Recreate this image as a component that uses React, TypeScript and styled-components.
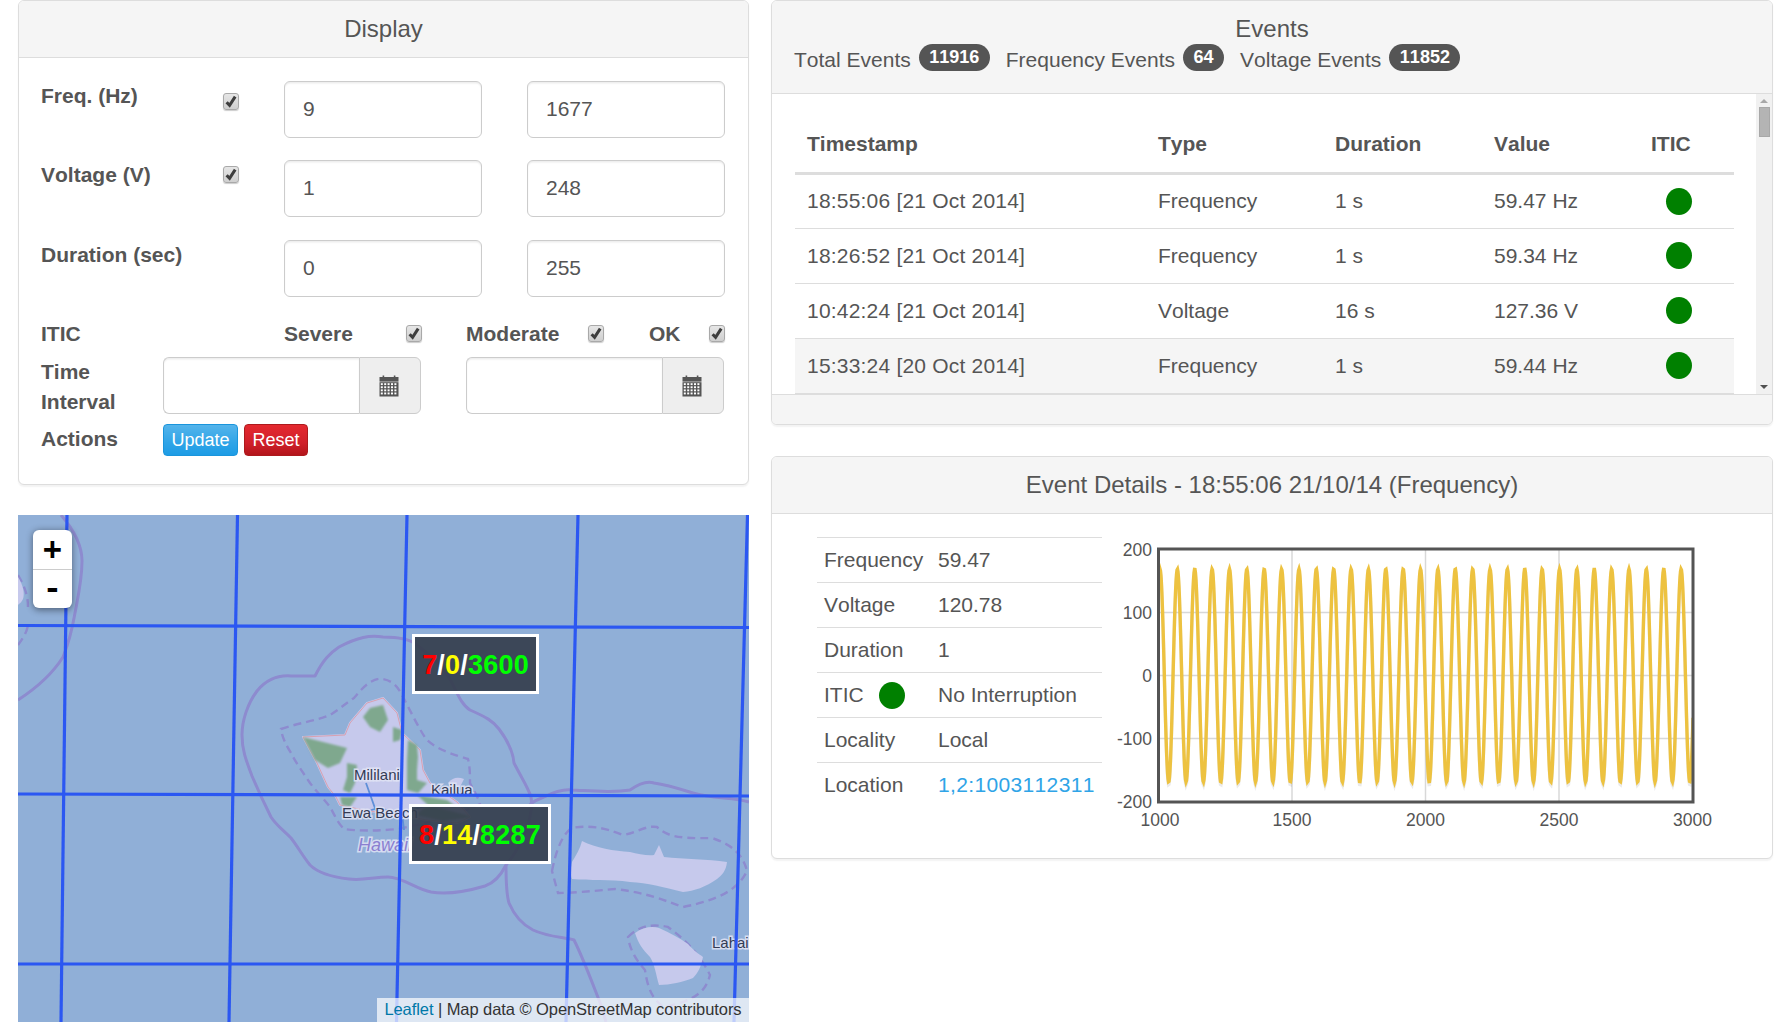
import React from "react";
import styled, { createGlobalStyle } from "styled-components";

const GlobalStyle = createGlobalStyle`
  html, body {
    margin: 0;
    padding: 0;
    background: #fff;
    overflow: hidden;
  }
  body {
    font-family: "Liberation Sans", Arial, sans-serif;
    font-size: 21px;
    line-height: 30px;
    color: #555;
    font-kerning: none;
  }
  * {
    box-sizing: border-box;
  }
`;

const Page = styled.div`
  display: flex;
  gap: 22px;
  width: 1790px;
  padding: 0 17px 0 18px;
  align-items: flex-start;
`;

const LeftColumn = styled.div`
  width: 731px;
  display: flex;
  flex-direction: column;
  gap: 30px;
`;

const RightColumn = styled.div`
  width: 1002px;
  display: flex;
  flex-direction: column;
  gap: 31px;
`;

const Panel = styled.section`
  border: 1px solid #ddd;
  border-radius: 6px;
  background: #fff;
  box-shadow: 0 1.5px 1.5px rgba(0, 0, 0, 0.05);
  overflow: hidden;
`;

const PanelHeader = styled.header`
  background: #f5f5f5;
  border-bottom: 1px solid #ddd;
  padding: 11px 22px;
  height: 57px;
`;

const EventsHeader = styled(PanelHeader)`
  height: 93px;
`;

const PanelTitle = styled.h3`
  margin: 0;
  font-size: 24px;
  font-weight: 400;
  line-height: 33px;
  text-align: center;
  color: #555;
`;

const DisplayBody = styled.div`
  padding: 23px 23px 28px 22px;
`;

const RangeGrid = styled.div`
  display: grid;
  grid-template-columns: 198px 198px 198px;
  grid-template-rows: 57px 58px 57px;
  column-gap: 45px;
  row-gap: 22px;
`;

const RangeLabel = styled.div`
  display: flex;
  justify-content: space-between;
  align-items: flex-start;
`;

const FieldLabel = styled.label<{ $width?: number }>`
  display: block;
  font-weight: 700;
  color: #555;
  flex: none;
  width: ${(p) => (p.$width ? `${p.$width}px` : "auto")};
`;

const TextInput = styled.input`
  display: block;
  width: 100%;
  height: 57px;
  padding: 0 18px 2px;
  border: 1px solid #ccc;
  border-radius: 6px;
  background: #fff;
  box-shadow: inset 0 1.5px 1.5px rgba(0, 0, 0, 0.075);
  font: inherit;
  color: #555;
`;

const CheckBox = styled.span<{ $top?: number }>`
  display: flex;
  align-items: center;
  justify-content: center;
  flex: none;
  width: 16px;
  height: 17px;
  margin-top: ${(p) => p.$top ?? 0}px;
  border: 1px solid #a9a9a9;
  border-radius: 3px;
  background: linear-gradient(#e6e6e6, #cfcfcf);
  box-shadow: 0 1px 1px rgba(0, 0, 0, 0.2);
`;

const FilterRow = styled.div`
  display: flex;
  margin-top: 22px;
  height: 30px;
`;

const FilterOption = styled.div<{ $gap?: number }>`
  display: flex;
  align-items: flex-start;
  margin-right: ${(p) => p.$gap ?? 0}px;
`;

const TimeRow = styled.div`
  display: flex;
  margin-top: 8px;
  gap: 45px;
`;

const TimeLabel = styled(FieldLabel)`
  width: 122px;
  margin-right: -45px;
`;

const InputGroup = styled.div`
  display: flex;
  width: 258px;
  height: 57px;
`;

const GroupInput = styled(TextInput)`
  flex: 1;
  min-width: 0;
  border-right: 0;
  border-radius: 6px 0 0 6px;
`;

const GroupAddon = styled.span`
  display: flex;
  align-items: center;
  justify-content: center;
  width: 62px;
  padding-right: 3px;
  border: 1px solid #ccc;
  border-radius: 0 6px 6px 0;
  background: #eee;
`;

const ActionsRow = styled.div`
  display: flex;
  margin-top: 7px;
`;

const ButtonRow = styled.div`
  display: flex;
  gap: 6px;
`;

const Button = styled.button<{ $variant: "primary" | "danger" }>`
  height: 32px;
  padding: 0 7.5px;
  border: 1px solid ${(p) => (p.$variant === "primary" ? "#1a95dc" : "#ad1a1d")};
  border-radius: 4px;
  color: #fff;
  font: 18px "Liberation Sans", Arial, sans-serif;
  font-kerning: none;
  background: ${(p) =>
    p.$variant === "primary"
      ? "linear-gradient(#54b4eb, #2fa4e7 60%, #1d9ce5)"
      : "linear-gradient(#e4292f, #d0202a 60%, #b3151b)"};
`;

const MapBox = styled.div`
  position: relative;
  width: 731px;
  height: 507px;
  overflow: hidden;
  background: #90afd7;
`;

const MapDrawing = styled.svg`
  display: block;
`;

const ZoomControl = styled.div`
  position: absolute;
  left: 15px;
  top: 15px;
  width: 39px;
  border-radius: 6px;
  background: #fff;
  box-shadow: 0 1.5px 7px rgba(0, 0, 0, 0.45);
`;

const ZoomButton = styled.a<{ $nudge?: number }>`
  display: flex;
  align-items: center;
  justify-content: center;
  height: 39px;
  padding-top: ${(p) => p.$nudge ?? 0}px;
  color: #000;
  font: 700 33px "Liberation Mono", monospace;
  & + & {
    border-top: 1px solid #ccc;
  }
`;

const Marker = styled.div<{ $left: number; $top: number; $width: number }>`
  position: absolute;
  left: ${(p) => p.$left}px;
  top: ${(p) => p.$top}px;
  width: ${(p) => p.$width}px;
  height: 60px;
  border: 3px solid #fff;
  background: rgba(51, 60, 74, 0.9);
  color: #fff;
  font-size: 27px;
  font-weight: 700;
  letter-spacing: 0.2px;
  line-height: 56px;
  text-align: center;
  white-space: nowrap;
`;

const Count = styled.span<{ $color: string }>`
  color: ${(p) => p.$color};
`;

const Attribution = styled.div`
  position: absolute;
  right: 0;
  bottom: 0;
  height: 24px;
  padding: 0 7.5px;
  background: rgba(255, 255, 255, 0.7);
  color: #333;
  font-size: 16.5px;
  letter-spacing: -0.07px;
  line-height: 23px;
  white-space: nowrap;
`;

const AttributionLink = styled.a`
  color: #0078a8;
`;

const Totals = styled.div`
  display: flex;
  align-items: flex-start;
  line-height: 30px;
  height: 30px;
`;

const TotalItem = styled.span`
  display: flex;
  align-items: flex-start;
  margin-right: 16px;
  color: #555;
`;

const Badge = styled.span`
  display: inline-block;
  height: 27px;
  margin: -1px 0 0 8px;
  padding: 0 10.5px;
  border-radius: 15px;
  background: #555;
  color: #fff;
  font-size: 18px;
  font-weight: 700;
  line-height: 26px;
`;

const EventsViewport = styled.div`
  display: flex;
  height: 300px;
  overflow: hidden;
`;

const TableWrap = styled.div`
  flex: 1;
  padding: 23px 22px 0 23px;
  overflow: hidden;
`;

const EventsTable = styled.table`
  width: 939px;
  table-layout: fixed;
  border-collapse: collapse;
`;

const HeadCell = styled.th`
  height: 56px;
  padding: 0 12px;
  border-bottom: 3px solid #ddd;
  font-weight: 700;
  text-align: left;
  color: #555;
`;

const EventRow = styled.tr<{ $active?: boolean }>`
  background: ${(p) => (p.$active ? "#f5f5f5" : "transparent")};
`;

const EventCell = styled.td`
  height: 55px;
  padding: 0 12px;
  border-bottom: 1px solid #ddd;
`;

const TimeCell = styled(EventCell)`
  letter-spacing: 0.2px;
`;

const StatusDot = styled.span<{ $indent?: number }>`
  display: block;
  width: 26px;
  height: 27px;
  margin-left: ${(p) => p.$indent ?? 0}px;
  border-radius: 50%;
  background: #008000;
`;

const ScrollTrack = styled.div`
  display: flex;
  flex-direction: column;
  align-items: center;
  flex: none;
  width: 16px;
  background: #f1f1f1;
`;

const ScrollThumb = styled.div`
  width: 11px;
  height: 30px;
  margin-top: 4px;
  border: 1px solid #a8a8a8;
  background: #b4b4b4;
`;

const ScrollArrow = styled.div<{ $up?: boolean }>`
  width: 0;
  height: 0;
  border-left: 4px solid transparent;
  border-right: 4px solid transparent;
  margin-top: ${(p) => (p.$up ? "5px" : "auto")};
  margin-bottom: ${(p) => (p.$up ? "0" : "5px")};
  border-bottom: ${(p) => (p.$up ? "4px solid #a8a8a8" : "0")};
  border-top: ${(p) => (p.$up ? "0" : "4px solid #505050")};
`;

const PanelFooter = styled.footer`
  height: 30px;
  background: #f5f5f5;
  border-top: 1px solid #ddd;
`;

const DetailsBody = styled.div`
  display: flex;
  align-items: flex-start;
  gap: 8px;
  padding: 23px 0 21px 45px;
`;

const DetailsTable = styled.table`
  width: 285px;
  flex: none;
  table-layout: fixed;
  border-collapse: collapse;
`;

const DetailCell = styled.td<{ $width?: number }>`
  height: 45px;
  padding: 0 7px;
  border-top: 1px solid #ddd;
  white-space: nowrap;
  width: ${(p) => (p.$width ? `${p.$width}px` : "auto")};
`;

const DetailLabel = styled.div`
  display: flex;
  align-items: center;
  gap: 15px;
`;

const DetailLink = styled.a`
  color: #2fa4e7;
  letter-spacing: 0.35px;
`;

const CheckMark = () => (
  <svg width="14" height="15" viewBox="0 0 14 15">
    <path d="M2.6 8.2 L5.6 11.4 L11.2 2.6" fill="none" stroke="#3e3e3e" strokeWidth="3" />
  </svg>
);

const CalendarIcon = () => {
  const dots = [];
  for (let row = 0; row < 4; row++) {
    for (let col = 0; col < 5; col++) {
      dots.push(<rect key={`${row}-${col}`} x={1.8 + col * 3.4} y={8.2 + row * 3.1} width="2" height="1.9" fill="#fff" />);
    }
  }
  return (
    <svg width="20" height="22" viewBox="0 0 20 22">
      <rect x="0.5" y="2" width="19" height="4.6" fill="#555" />
      <rect x="3.6" y="0.5" width="1.6" height="3" fill="#555" />
      <rect x="14.8" y="0.5" width="1.6" height="3" fill="#555" />
      <rect x="0.5" y="7.2" width="19" height="14.3" fill="#555" />
      {dots}
    </svg>
  );
};

const WATER_LINE = "#8d8bcf";
const GRATICULE = "#2b57f2";
const LAND = "#c6c9ec";
const FOREST = "#7fa88e";

const OAHU =
  "M285 222 L327 220 L332 208 L349 188 L365 183 L379 198 L384 218 L402 235 L405 255 L412 268 L439 287 L452 302 L439 308 L409 305 L392 302 L345 295 L322 290 L318 282 L310 272 L299 248 Z";

const LandLabel = styled.text`
  font-family: "Liberation Sans", Arial, sans-serif;
  font-size: 15px;
  fill: #333b55;
  paint-order: stroke;
  stroke: rgba(225, 228, 245, 0.85);
  stroke-width: 3px;
`;

const SeaLabel = styled(LandLabel)`
  font-size: 18px;
  font-style: italic;
  fill: #8b7fd0;
`;

const MapSketch = () => (
  <MapDrawing width="731" height="507" viewBox="0 0 731 507">
    <defs>
      <filter id="soft">
        <feGaussianBlur stdDeviation="0.7" />
      </filter>
      <filter id="softer">
        <feGaussianBlur stdDeviation="1.3" />
      </filter>
    </defs>
    <g filter="url(#soft)">
      {/* maritime boundaries */}
      <g fill="none" stroke={WATER_LINE} strokeWidth="3" strokeLinejoin="round">
        <path d="M297 161 C305 145 312 138 321 132 C340 122 352 120 365 122 C382 122 392 124 399 130 C415 142 425 152 433 166 C440 180 444 190 452 195 C468 202 475 206 481 214 C490 226 495 236 496 248 C503 262 510 272 513 282 C516 300 505 330 488 350 C482 362 476 368 467 371 C450 376 430 380 413 377 C398 374 384 362 370 362 C356 362 344 366 331 364 C314 362 300 358 292 350 C284 340 280 332 273 323 C265 315 258 310 253 302 C246 288 240 275 234 261 C228 245 224 235 224 220 C224 205 230 188 239 176 C248 165 260 160 273 161 Z" />
        <path d="M488 350 C488 365 488 378 491 388 C497 402 505 410 515 415 C530 422 545 422 556 425 C566 445 575 470 583 490 L588 507" />
        <path d="M510 292 C515 285 520 285 526 282 C538 276 546 274 554 275 C575 276 595 278 612 275 C622 268 630 266 636 268 C650 270 662 274 675 278 C695 284 715 282 731 287" />
        <path d="M43 0 C56 15 64 30 64 46 C64 65 60 82 57 98 C54 115 50 130 45 142 C35 158 20 172 0 185" />
      </g>
      <g fill="none" stroke={WATER_LINE} strokeWidth="2.4" strokeDasharray="8 5">
        <path d="M263 214 C280 208 298 206 312 200 C322 194 328 188 336 183 C345 172 355 162 365 164 C375 166 380 172 384 180 C392 195 400 212 408 224 C420 236 438 240 450 244 C452 252 452 260 452 268 C456 276 460 282 462 289 C440 300 410 308 380 314 C360 316 340 316 326 314 C318 306 316 298 312 292 C306 284 298 276 292 268 C284 256 278 248 273 238 C268 230 264 222 263 214 Z" />
        <path d="M534 356 C538 335 545 318 554 313 C570 310 585 312 605 320 C618 318 628 310 639 312 C648 320 656 324 694 323 C715 330 725 340 729 356 C720 375 700 385 665 392 C645 385 630 378 597 374 C575 376 555 378 540 378 Z" />
        <path d="M610 422 C620 412 632 408 650 412 C668 425 682 440 692 460 C688 475 680 485 646 492 C635 485 630 475 627 455 C618 445 612 435 610 422 Z" />
        <path d="M0 60 C6 70 10 80 10 92 M0 130 C6 122 10 115 10 108" />
      </g>
      {/* land */}
      <path fill={LAND} stroke={LAND} strokeWidth="2" strokeLinejoin="round" d={OAHU} />
      <path fill="none" stroke="#d9a0b0" strokeWidth="1" d={OAHU} />
      <path fill={LAND} d="M430 268 C435 262 440 262 446 264 L442 272 L434 274 Z" />
      <path fill={LAND} d="M564 326 C578 333 596 336 612 337 C620 339 630 341 636 340 L641 330 L646 342 C665 344 690 344 709 347 C708 356 704 360 699 364 C688 372 676 376 665 377 C645 372 630 368 612 367 C592 364 572 366 554 364 C552 358 553 352 554 347 C558 340 562 334 564 326 Z" />
      <path fill={LAND} d="M617 418 C625 412 634 411 641 413 C652 418 662 423 670 429 C676 436 681 439 685 442 C683 452 680 458 675 463 C665 467 652 470 641 470 C638 460 637 450 632 442 C625 435 620 428 617 418 Z" />
      <path fill={LAND} d="M0 62 C5 70 7 78 5 84 C3 88 2 88 0 90 Z" />
      <g fill="none" stroke="#5f8fd8" strokeWidth="1.8">
        <path d="M338 302 C350 296 358 292 365 294 C372 296 376 298 384 298 C392 296 398 292 410 291 L425 290" />
        <path d="M348 268 L358 296 M384 298 L386 315" />
      </g>
    </g>
    <g fill={FOREST} filter="url(#softer)">
      <path d="M285 222 L329 233 L322 248 L310 253 L297 245 Z" />
      <path d="M352 193 L365 190 L370 205 L362 217 L352 212 L345 202 Z" />
      <path d="M390 225 L399 230 L400 242 L399 255 L399 265 L409 268 L400 278 L389 275 L389 262 L389 245 Z" />
      <path d="M375 212 L384 215 L382 225 L375 227 Z" />
      <path d="M329 248 L339 250 L337 268 L332 278 L325 275 L329 262 Z" />
      <path d="M322 282 L339 282 L332 292 L324 290 Z" />
      <path d="M399 280 L429 285 L439 292 L412 292 Z" />
      <path d="M410 290 L455 302 L425 306 L398 300 Z" />
    </g>
    <LandLabel x="336" y="265">Mililani</LandLabel>
    <LandLabel x="413" y="280">Kailua</LandLabel>
    <LandLabel x="324" y="303">Ewa Beach</LandLabel>
    <SeaLabel x="340" y="336">Hawaii</SeaLabel>
    <LandLabel x="694" y="433">Lahai</LandLabel>
    {/* graticule */}
    <g stroke={GRATICULE} strokeWidth="3.2" fill="none">
      <path d="M0 110.5 L731 112.5" />
      <path d="M0 279 L731 281" />
      <path d="M0 449 L731 449" />
      <path d="M49 0 L43 507" />
      <path d="M219.5 0 L211 507" />
      <path d="M389 0 L378.5 507" />
      <path d="M560 0 L548 507" />
      <path d="M729.5 0 L716 507" />
    </g>
  </MapDrawing>
);

const CHART_X = 1110;
const CHART_Y = 537;
const plotLeft = 1158.5 - CHART_X;
const plotRight = 1693 - CHART_X;
const plotTop = 549 - CHART_Y;
const plotBottom = 802 - CHART_Y;
const zeroY = 675.5 - CHART_Y;

const wavePoints = () => {
  const points: string[] = [];
  for (let x = plotLeft; x <= plotRight; x += 0.5) {
    const value = 169 * Math.cos((2 * Math.PI * (x - (1160 - CHART_X))) / 17.37);
    points.push(`${x.toFixed(1)},${(zeroY - value * 0.63).toFixed(1)}`);
  }
  return points.join(" ");
};

const TickText = styled.text`
  font-family: "Liberation Sans", Arial, sans-serif;
  font-size: 17.5px;
  fill: #545454;
`;

const xTicks = [
  { label: "1000", x: 1160 },
  { label: "1500", x: 1292 },
  { label: "2000", x: 1425.5 },
  { label: "2500", x: 1559 },
  { label: "3000", x: 1692.5 },
];

const yTicks = [
  { label: "200", y: 550 },
  { label: "100", y: 612.5 },
  { label: "0", y: 675.5 },
  { label: "-100", y: 738.5 },
  { label: "-200", y: 801.5 },
];

const WaveChart = () => {
  const points = wavePoints();
  return (
    <svg width="620" height="300" viewBox="0 0 620 300">
      <defs>
        <clipPath id="plot">
          <rect x={plotLeft} y={plotTop} width={plotRight - plotLeft} height={plotBottom - plotTop} />
        </clipPath>
      </defs>
      <g stroke="#d8d8d8" strokeWidth="1.5">
        {[1292, 1425.5, 1559].map((x) => (
          <line key={x} x1={x - CHART_X} x2={x - CHART_X} y1={plotTop} y2={plotBottom} />
        ))}
        {[612.5, 675.5, 738.5].map((y) => (
          <line key={y} x1={plotLeft} x2={plotRight} y1={y - CHART_Y} y2={y - CHART_Y} />
        ))}
      </g>
      <g clipPath="url(#plot)" fill="none">
        <polyline points={points} stroke="rgba(0,0,0,0.08)" strokeWidth="3.4" transform="translate(0 3)" />
        <polyline points={points} stroke="#edc240" strokeWidth="3.4" />
      </g>
      <rect x={plotLeft} y={plotTop} width={plotRight - plotLeft} height={plotBottom - plotTop} fill="none" stroke="#545454" strokeWidth="3" />
      {yTicks.map((t) => (
        <TickText key={t.label} x={1152 - CHART_X} y={t.y - CHART_Y + 6} textAnchor="end">
          {t.label}
        </TickText>
      ))}
      {xTicks.map((t) => (
        <TickText key={t.label} x={t.x - CHART_X} y={826 - CHART_Y} textAnchor="middle">
          {t.label}
        </TickText>
      ))}
    </svg>
  );
};

const events = [
  { time: "18:55:06 [21 Oct 2014]", type: "Frequency", duration: "1 s", value: "59.47 Hz" },
  { time: "18:26:52 [21 Oct 2014]", type: "Frequency", duration: "1 s", value: "59.34 Hz" },
  { time: "10:42:24 [21 Oct 2014]", type: "Voltage", duration: "16 s", value: "127.36 V" },
  { time: "15:33:24 [20 Oct 2014]", type: "Frequency", duration: "1 s", value: "59.44 Hz" },
];

const ranges = [
  { label: "Freq. (Hz)", min: "9", max: "1677", check: 12 },
  { label: "Voltage (V)", min: "1", max: "248", check: 6 },
  { label: "Duration (sec)", min: "0", max: "255" },
];

const App: React.FC = () => {
  return (
    <>
      <GlobalStyle />
      <Page>
        <LeftColumn>
          <Panel>
            <PanelHeader>
              <PanelTitle>Display</PanelTitle>
            </PanelHeader>
            <DisplayBody>
              <RangeGrid>
                {ranges.map((r) => (
                  <React.Fragment key={r.label}>
                    <RangeLabel>
                      <FieldLabel>{r.label}</FieldLabel>
                      {r.check !== undefined && (
                        <CheckBox $top={r.check}>
                          <CheckMark />
                        </CheckBox>
                      )}
                    </RangeLabel>
                    <TextInput defaultValue={r.min} />
                    <TextInput defaultValue={r.max} />
                  </React.Fragment>
                ))}
              </RangeGrid>
              <FilterRow>
                <FieldLabel $width={243}>ITIC</FieldLabel>
                <FilterOption $gap={44}>
                  <FieldLabel $width={122}>Severe</FieldLabel>
                  <CheckBox $top={6}>
                    <CheckMark />
                  </CheckBox>
                </FilterOption>
                <FilterOption $gap={45}>
                  <FieldLabel $width={122}>Moderate</FieldLabel>
                  <CheckBox $top={6}>
                    <CheckMark />
                  </CheckBox>
                </FilterOption>
                <FilterOption>
                  <FieldLabel $width={60}>OK</FieldLabel>
                  <CheckBox $top={6}>
                    <CheckMark />
                  </CheckBox>
                </FilterOption>
              </FilterRow>
              <TimeRow>
                <TimeLabel>Time Interval</TimeLabel>
                <InputGroup>
                  <GroupInput />
                  <GroupAddon>
                    <CalendarIcon />
                  </GroupAddon>
                </InputGroup>
                <InputGroup>
                  <GroupInput />
                  <GroupAddon>
                    <CalendarIcon />
                  </GroupAddon>
                </InputGroup>
              </TimeRow>
              <ActionsRow>
                <FieldLabel $width={122}>Actions</FieldLabel>
                <ButtonRow>
                  <Button $variant="primary">Update</Button>
                  <Button $variant="danger">Reset</Button>
                </ButtonRow>
              </ActionsRow>
            </DisplayBody>
          </Panel>
          <MapBox>
            <MapSketch />
            <ZoomControl>
              <ZoomButton $nudge={6}>+</ZoomButton>
              <ZoomButton $nudge={2}>-</ZoomButton>
            </ZoomControl>
            <Marker $left={394} $top={119} $width={127}>
              <Count $color="#f00">7</Count>/<Count $color="#ff0">0</Count>/<Count $color="#0f0">3600</Count>
            </Marker>
            <Marker $left={391} $top={289} $width={142}>
              <Count $color="#f00">8</Count>/<Count $color="#ff0">14</Count>/<Count $color="#0f0">8287</Count>
            </Marker>
            <Attribution>
              <AttributionLink>Leaflet</AttributionLink> | Map data © OpenStreetMap contributors
            </Attribution>
          </MapBox>
        </LeftColumn>
        <RightColumn>
          <Panel>
            <EventsHeader>
              <PanelTitle>Events</PanelTitle>
              <Totals>
                <TotalItem>
                  Total Events<Badge>11916</Badge>
                </TotalItem>
                <TotalItem>
                  Frequency Events<Badge>64</Badge>
                </TotalItem>
                <TotalItem>
                  Voltage Events<Badge>11852</Badge>
                </TotalItem>
              </Totals>
            </EventsHeader>
            <EventsViewport>
              <TableWrap>
                <EventsTable>
                  <colgroup>
                    <col style={{ width: 351 }} />
                    <col style={{ width: 177 }} />
                    <col style={{ width: 159 }} />
                    <col style={{ width: 157 }} />
                    <col style={{ width: 95 }} />
                  </colgroup>
                  <thead>
                    <tr>
                      <HeadCell>Timestamp</HeadCell>
                      <HeadCell>Type</HeadCell>
                      <HeadCell>Duration</HeadCell>
                      <HeadCell>Value</HeadCell>
                      <HeadCell>ITIC</HeadCell>
                    </tr>
                  </thead>
                  <tbody>
                    {events.map((e, i) => (
                      <EventRow key={e.time} $active={i === 3}>
                        <TimeCell>{e.time}</TimeCell>
                        <EventCell>{e.type}</EventCell>
                        <EventCell>{e.duration}</EventCell>
                        <EventCell>{e.value}</EventCell>
                        <EventCell>
                          <StatusDot $indent={15} />
                        </EventCell>
                      </EventRow>
                    ))}
                  </tbody>
                </EventsTable>
              </TableWrap>
              <ScrollTrack>
                <ScrollArrow $up />
                <ScrollThumb />
                <ScrollArrow />
              </ScrollTrack>
            </EventsViewport>
            <PanelFooter />
          </Panel>
          <Panel>
            <PanelHeader>
              <PanelTitle>Event Details - 18:55:06 21/10/14 (Frequency)</PanelTitle>
            </PanelHeader>
            <DetailsBody>
              <DetailsTable>
                <tbody>
                  <tr>
                    <DetailCell $width={114}>Frequency</DetailCell>
                    <DetailCell>59.47</DetailCell>
                  </tr>
                  <tr>
                    <DetailCell>Voltage</DetailCell>
                    <DetailCell>120.78</DetailCell>
                  </tr>
                  <tr>
                    <DetailCell>Duration</DetailCell>
                    <DetailCell>1</DetailCell>
                  </tr>
                  <tr>
                    <DetailCell>
                      <DetailLabel>
                        ITIC
                        <StatusDot />
                      </DetailLabel>
                    </DetailCell>
                    <DetailCell>No Interruption</DetailCell>
                  </tr>
                  <tr>
                    <DetailCell>Locality</DetailCell>
                    <DetailCell>Local</DetailCell>
                  </tr>
                  <tr>
                    <DetailCell>Location</DetailCell>
                    <DetailCell>
                      <DetailLink>1,2:1003112311</DetailLink>
                    </DetailCell>
                  </tr>
                </tbody>
              </DetailsTable>
              <WaveChart />
            </DetailsBody>
          </Panel>
        </RightColumn>
      </Page>
    </>
  );
};

export default App;
